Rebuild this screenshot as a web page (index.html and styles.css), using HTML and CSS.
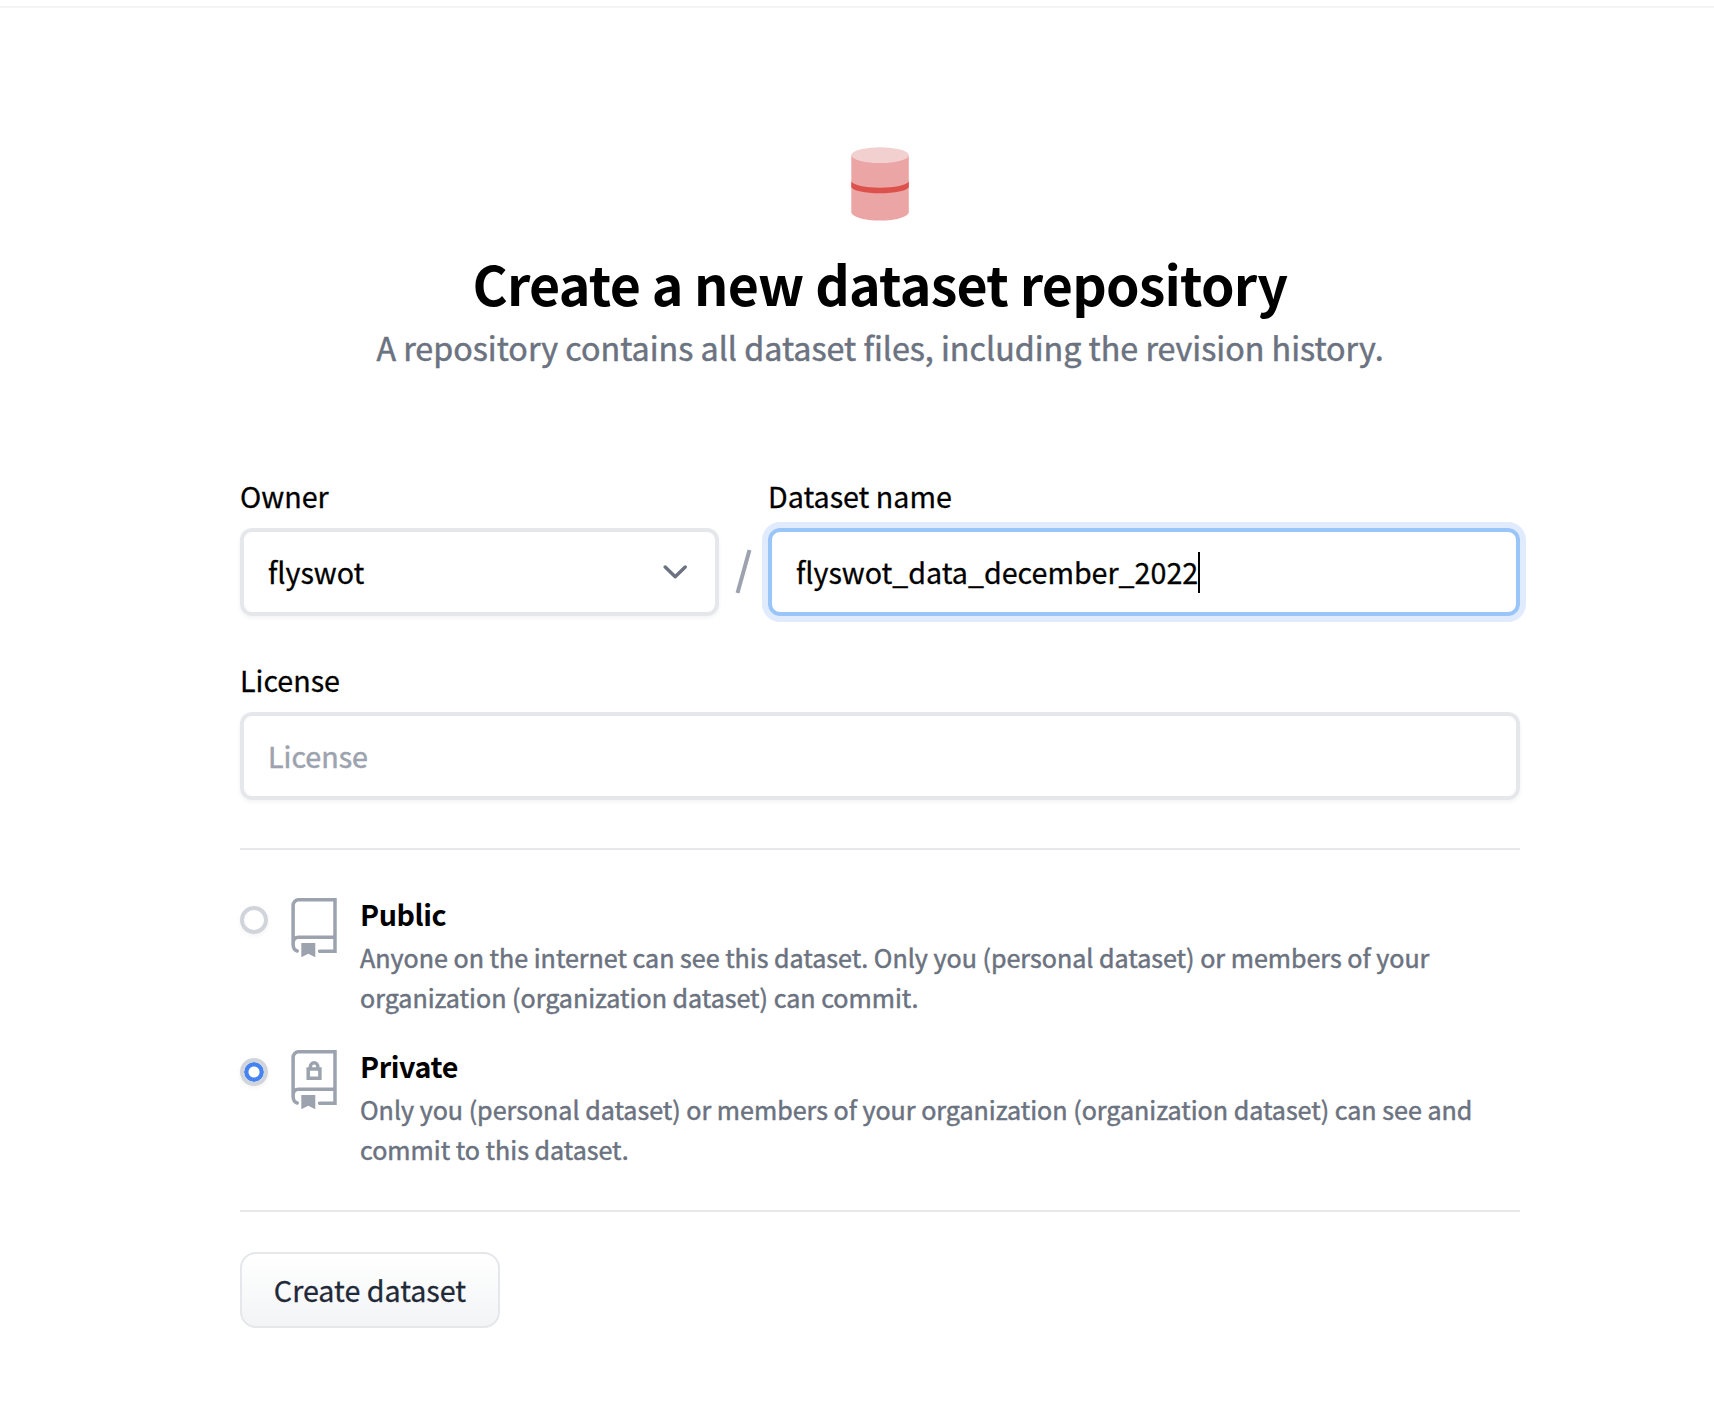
FILE: index.html
```html
<!DOCTYPE html>
<html lang="en">
<head>
<meta charset="utf-8">
<title>Create a new dataset repository</title>
<link rel="stylesheet" href="styles.css">
</head>
<body>
<div class="topbar"></div>
<main class="page">
  <header class="intro">
    <svg class="logo" width="60" height="76" viewBox="0 0 60 76">
      <path d="M1.3 9v57c0 4.8 12.9 8.6 28.8 8.6S58.8 70.800 58.800 66V9z" fill="#eba5a4"/>
      <ellipse cx="30.050" cy="9.200" rx="28.750" ry="7.900" fill="#f2d0d0"/>
      <path d="M1.300 35.500C3.500 39 15 41.700 30 41.700S56.600 39 58.800 35.500v5.800C56.600 44.800 45 47.300 30 47.300S3.500 44.800 1.300 41.300z" fill="#dc514b"/>
    </svg>
    <h1 class="title">Create a new dataset repository</h1>
    <p class="subtitle">A repository contains all dataset files, including the revision history.</p>
  </header>
  <form class="form">
    <div class="row">
      <div class="field owner">
        <span class="label">Owner</span>
        <div class="box select"><span class="value">flyswot</span>
          <svg width="24" height="16" viewBox="0 0 24 16" fill="none" stroke="#6b7280" stroke-width="3.400" stroke-linecap="round" stroke-linejoin="round"><path d="M2.200 3L12.200 12.800L22.200 3"/></svg>
        </div>
      </div>
      <svg class="slash" width="49" height="88" viewBox="0 0 49 88"><path d="M30.500 22L18.500 65" stroke="#9ca3af" stroke-width="4"/></svg>
      <div class="field name">
        <span class="label">Dataset name</span>
        <div class="box focused"><span class="value">flyswot_data_december_2022</span><span class="caret"></span></div>
      </div>
    </div>
    <div class="field license">
      <span class="label">License</span>
      <div class="box placeholder"><span class="value">License</span></div>
    </div>
    <hr class="rule">
    <div class="options">
      <div class="option">
        <span class="radio"></span>
        <svg class="book" width="48" height="62" viewBox="0 0 48 62" fill="none" stroke="#9ca3af" stroke-width="3.500" stroke-linecap="round">
          <path d="M29.500 54.200H45V2.800H8.600a5.500 5.500 0 0 0-5.500 5.500V47.500c0 3.500 1.500 5.600 4.100 6.500M3.100 46.500c0-4 2-6.200 5.500-6.200H45"/>
          <path d="M11.300 46h14v14.300l-7-3.600-7 3.600z" fill="#9ca3af" stroke="none"/>
        </svg>
        <div class="copy">
          <strong class="name-line">Public</strong>
          <p class="desc">Anyone on the internet can see this dataset. Only you (personal dataset) or members of your<br>organization (organization dataset) can commit.</p>
        </div>
      </div>
      <div class="option">
        <span class="radio checked"></span>
        <svg class="book" width="48" height="62" viewBox="0 0 48 62" fill="none" stroke="#9ca3af" stroke-width="3.500" stroke-linecap="round">
          <path d="M29.500 54.200H45V2.800H8.600a5.500 5.500 0 0 0-5.500 5.500V47.500c0 3.500 1.500 5.600 4.100 6.500M3.100 46.500c0-4 2-6.200 5.500-6.200H45"/>
          <path d="M11.300 46h14v14.300l-7-3.600-7 3.600z" fill="#9ca3af" stroke="none"/>
          <path d="M18.200 19.900h11.700v9.300H18.200zM20.400 19v-1.500a3.700 3.700 0 0 1 7.400 0V19" stroke-width="3.500"/>
        </svg>
        <div class="copy">
          <strong class="name-line">Private</strong>
          <p class="desc">Only you (personal dataset) or members of your organization (organization dataset) can see and<br>commit to this dataset.</p>
        </div>
      </div>
    </div>
    <hr class="rule">
    <button class="submit" type="button">Create dataset</button>
  </form>
</main>
</body>
</html>
```
FILE: styles.css
```css
* { box-sizing: border-box; }
body {
  margin: 0;
  background: #fff;
  color: #000;
  font-family: "Noto Sans CJK SC", "Noto Sans CJK JP", sans-serif;
  font-size: 28.65px;
  -webkit-text-stroke: .3px currentColor;
}
.topbar { height: 8px; border-bottom: 2px solid #f3f4f6; }
.page { width: 1280px; margin-left: 240px; padding-top: 138px; }
.intro { display: flex; flex-direction: column; align-items: center; white-space: nowrap; }
.logo { display: block; }
.title {
  margin: 25px 0 0;
  font-size: 53.7px;
  line-height: 72px;
  font-weight: 600;
  letter-spacing: -.72px;
  -webkit-text-stroke: 0;
}
.subtitle {
  margin: 0;
  font-size: 32.24px;
  line-height: 56px;
  color: #6b7280;
  -webkit-text-stroke: .5px currentColor;
}
.form { margin-top: 97px; }
.row { display: flex; align-items: flex-end; }
.field { display: flex; flex-direction: column; gap: 8px; }
.label { line-height: 48px; }
.owner { width: 479px; }
.name { flex: 1; }
.license { margin-top: 40px; }
.box {
  display: flex;
  align-items: center;
  height: 88px;
  padding: 0 24px;
  border: 4px solid #e5e7eb;
  border-radius: 12px;
  box-shadow: 0 2px 4px rgba(0, 0, 0, .05);
  white-space: nowrap;
}
.value { padding-bottom: 2px; }
.select { justify-content: space-between; padding-right: 28px; }
.focused { border-color: #9ac5f9; box-shadow: 0 0 0 6px #e0ebfd; }
.caret { width: 2px; height: 41px; background: #000; }
.placeholder { color: #9ca3af; -webkit-text-stroke: .5px currentColor; }
.slash { display: block; }
.rule { height: 2px; margin: 48px 0 0; border: 0; background: #e5e7eb; }
.options { display: flex; flex-direction: column; gap: 29px; padding-top: 44px; }
.option { display: flex; height: 123px; }
.radio {
  width: 28px;
  height: 28px;
  margin-top: 12px;
  border: 4px solid #d1d5db;
  border-radius: 50%;
  box-shadow: 0 2px 4px rgba(0, 0, 0, .05);
}
.checked { background: radial-gradient(circle, #fff 0 5px, #4483f0 6px) padding-box; }
.book { margin: 3px 0 0 22px; }
.copy { margin-left: 22px; white-space: nowrap; }
.name-line {
  display: block;
  font-weight: 600;
  line-height: 40px;
  letter-spacing: -.4px;
  -webkit-text-stroke: 0;
}
.desc {
  margin: 3px 0 0;
  font-size: 25.07px;
  line-height: 40px;
  color: #6b7280;
  -webkit-text-stroke: .5px currentColor;
}
.options + .rule { margin-top: 41px; }
.submit {
  display: block;
  width: 260px;
  height: 76px;
  margin-top: 40px;
  padding: 0 0 2px;
  border: 2px solid #e5e7eb;
  border-radius: 16px;
  background: linear-gradient(#fff, #f3f4f6);
  color: #1f2937;
  font: inherit;
  -webkit-text-stroke: .3px currentColor;
}
```
